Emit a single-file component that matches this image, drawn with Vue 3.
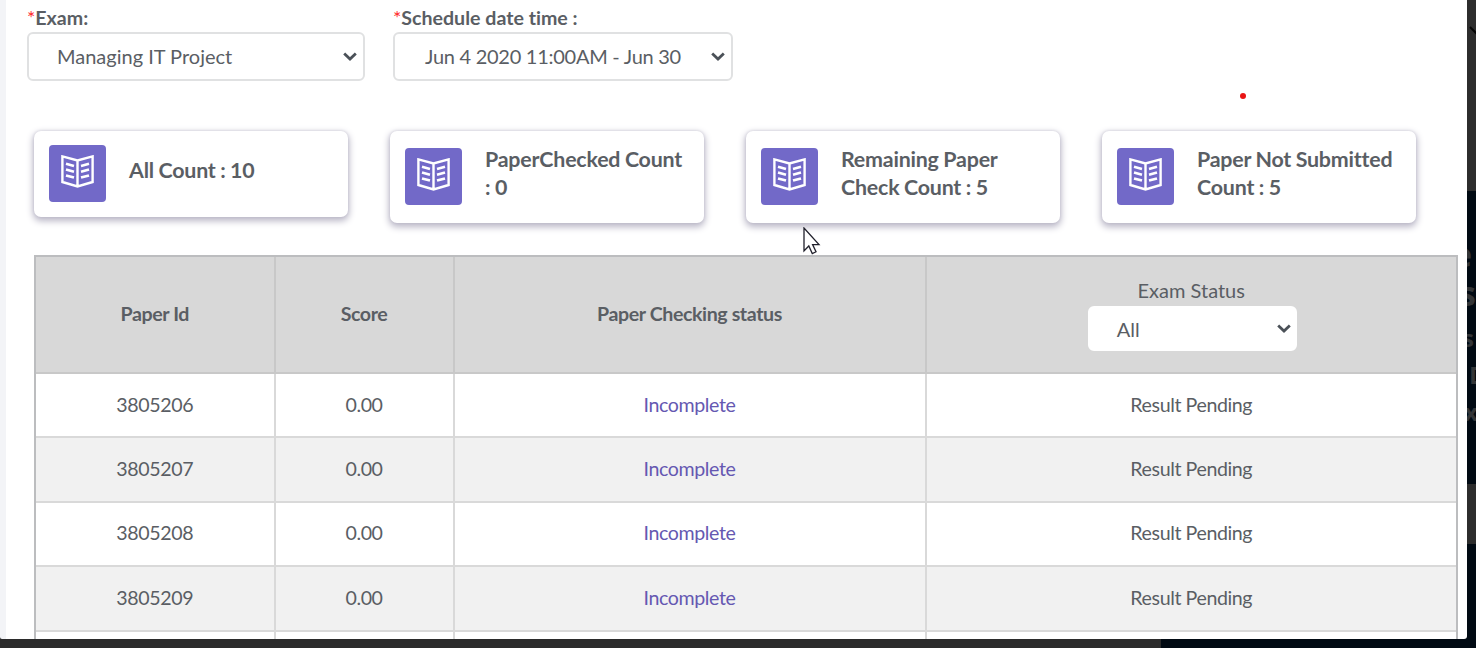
<script setup>
const cards = [
  { lines: ['All Count : 10'], single: true },
  { lines: ['PaperChecked Count', ': 0'] },
  { lines: ['Remaining Paper', 'Check Count : 5'] },
  { lines: ['Paper Not Submitted', 'Count : 5'] },
]
const rows = ['3805206', '3805207', '3805208', '3805209', '3805210']
</script>

<template>
  <div class="screen">
    <div class="backdrop-side">
      <div class="side-top"></div>
      <div class="side-block"></div>
      <svg class="side-text" width="9" height="648" viewBox="0 0 9 648">
        <path d="M3 27 L10 34" stroke="#050505" stroke-width="2" />
        <text x="-15" y="267" font-size="34">e</text>
        <text x="-8" y="306" font-size="34">s</text>
        <text x="-5" y="347" font-size="24">s</text>
        <text x="2" y="384" font-size="24">D</text>
        <text x="-3" y="421" font-size="24">x</text>
      </svg>
    </div>
    <div class="backdrop-bottom"></div>

    <main class="panel">
      <section class="filters">
        <div class="field first">
          <label><i>*</i>Exam:</label>
          <div class="select">
            <span>Managing IT Project</span>
            <svg class="chev" width="14" height="9" viewBox="0 0 14 9"><path d="M1.2 1.5 L7 7 L12.8 1.5" /></svg>
          </div>
        </div>
        <div class="field second">
          <label><i>*</i>Schedule date time :</label>
          <div class="select">
            <span>Jun 4 2020 11:00AM - Jun 30</span>
            <svg class="chev" width="14" height="9" viewBox="0 0 14 9"><path d="M1.2 1.5 L7 7 L12.8 1.5" /></svg>
          </div>
        </div>
      </section>

      <section class="cards">
        <article v-for="(c, n) in cards" :key="n" class="card" :class="{ single: c.single }">
          <div class="badge">
            <svg width="33" height="33" viewBox="0 0 33 33">
              <path d="M1.4 1.4 L16.5 5.5 L31.6 1.4 V27 L16.5 31.5 L1.4 27 Z M16.5 5.5 V31.5" stroke-width="2.4" />
              <path d="M5 8.8 L13 11 M5 14.6 L13 16.8 M5 20.4 L13 22.6 M28 8.8 L20 11 M28 14.6 L20 16.8 M28 20.4 L20 22.6" stroke-width="2.6" />
            </svg>
          </div>
          <div class="count"><div v-for="l in c.lines" :key="l">{{ l }}</div></div>
        </article>
      </section>

      <section class="table">
        <div class="row head">
          <div><b>Paper Id</b></div>
          <div><b>Score</b></div>
          <div><b>Paper Checking status</b></div>
          <div class="status">
            <span>Exam Status</span>
            <div class="select small">
              <span>All</span>
              <svg class="chev" width="14" height="9" viewBox="0 0 14 9"><path d="M1.2 1.5 L7 7 L12.8 1.5" /></svg>
            </div>
          </div>
        </div>
        <div v-for="(id, n) in rows" :key="id" class="row" :class="{ odd: n % 2 }">
          <div>{{ id }}</div>
          <div>0.00</div>
          <div class="link">Incomplete</div>
          <div>Result Pending</div>
        </div>
      </section>
    </main>

    <span class="dot"></span>
    <svg class="cursor" width="18" height="30" viewBox="0 0 18 30">
      <path d="M1 1 V24 L5.8 19 L9.3 26.6 L13 24.8 L9.6 17.6 H16 Z" fill="#fff" stroke="#20202b" stroke-width="1.3" />
    </svg>
  </div>
</template>

<style>
body { margin: 0; overflow: hidden; }
</style>

<style scoped>
* { box-sizing: border-box; }
.screen {
  position: relative; width: 1476px; height: 648px; overflow: hidden;
  background: #2b2b2b; color: #5a5e64;
  font-family: Lato, sans-serif; font-size: 20px; font-variant-ligatures: none;
}
.backdrop-side { position: absolute; right: 0; top: 0; width: 10px; height: 648px; background: #010a13; }
.side-top { height: 191px; background: #2d2d2d; }
.side-block { margin-top: 293px; height: 60px; background: #2d2d2d; }
.side-text { position: absolute; left: 1px; top: 0; fill: #333537; font-family: "Open Sans", sans-serif; font-weight: 700; }
.backdrop-bottom { position: absolute; left: 1161px; right: 0; bottom: 0; height: 10px; background: #010a13; }
.panel {
  position: relative; width: 1467px; height: 639px; overflow: hidden; background: #fff;
  border-left: 6px solid #f3f4f7; border-radius: 0 0 3px 2px;
}
.filters { display: flex; gap: 28px; height: 130px; padding: 5px 0 0 21px; }
.field.first { width: 338px; }
.field.second { width: 340px; }
label { display: block; height: 27px; line-height: 25px; font-size: 19.6px; font-weight: 700; white-space: nowrap; }
label i { color: #ff2b2b; font-style: normal; font-weight: 400; }
.select {
  display: flex; align-items: center; justify-content: space-between; height: 49px;
  padding: 0 6px 2px 28px; border: 2px solid #e0e1e2; border-radius: 6px; background: #fff; white-space: nowrap;
}
.second .select { padding-left: 30px; letter-spacing: -0.27px; }
.chev { fill: none; stroke: #4b5158; stroke-width: 2.8; position: relative; top: 1px; }
.cards { display: flex; align-items: flex-start; gap: 42px; height: 125px; padding-left: 28px; }
.card {
  display: flex; width: 314px; height: 92px; margin-top: 1px; padding: 17px 0 0 15px; border-radius: 7px; background: #fff;
  box-shadow: 0 3px 7px 1px #b9b6c6, 0 0 3px #d5d4df;
}
.card.single { height: 86px; padding-top: 14px; }
.badge { width: 57px; height: 57px; padding: 10px 0 0 12px; border-radius: 4px; background: #7269c8; flex: none; }
.badge svg { display: block; fill: none; stroke: #fff; }
.count { margin: -3px 0 0 23px; font-size: 21.4px; font-weight: 700; letter-spacing: -0.2px; word-spacing: -0.4px; line-height: 28px; white-space: nowrap; }
.single .count { margin-top: 11px; }
.table {
  width: 1424px; margin-left: 28px; border: 2px solid #bcbdbf; border-bottom: 0;
}
.row { display: grid; grid-template-columns: 239.5px 179px 472px 1fr; height: 64.4px; background: #fff; font-size: 19.6px; letter-spacing: -0.4px; }
.row.odd { background: #f1f1f1; }
.row > div {
  display: flex; align-items: center; justify-content: center;
  border-right: 2px solid #d9d9d9; border-bottom: 2px solid #d9d9d9; padding-bottom: 2px;
}
.row > div:last-child { border-right: 0; }
.row.head { height: 117px; background: #d8d8d8; }
.row.head > div { border-color: #c8c8c8; padding-bottom: 2px; }
.row b { font-weight: 700; font-size: 19.6px; }
.row .link { color: #6558b1; }
.row.head > .status { flex-direction: column; padding-bottom: 0; font-size: 20px; letter-spacing: 0; }
.status > span { line-height: 26px; margin: -1px 0 3px; }
.select.small { width: 209px; height: 45px; border-color: #fff; padding: 0 4px 0 27px; position: relative; left: 1px; }
.small .chev { top: 0; }
.dot { position: absolute; left: 1240px; top: 93px; width: 6px; height: 6px; border-radius: 50%; background: #e91515; }
.cursor { position: absolute; left: 803px; top: 227px; }
</style>
